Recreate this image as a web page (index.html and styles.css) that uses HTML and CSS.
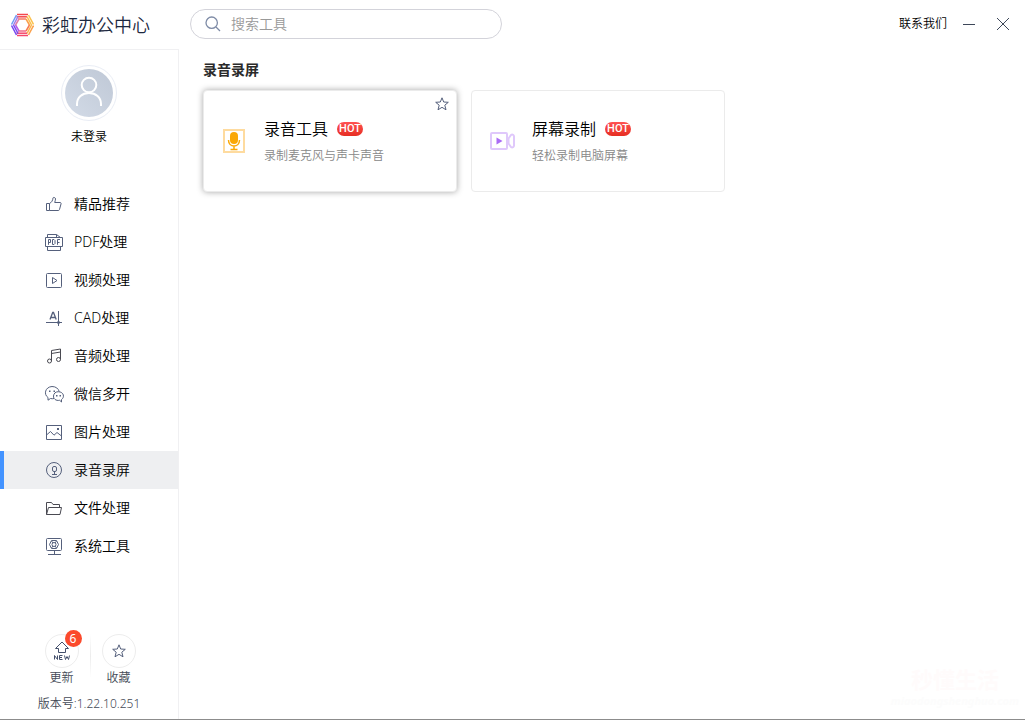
FILE: index.html
```html
<!DOCTYPE html>
<html lang="zh-CN">
<head>
<meta charset="utf-8">
<meta name="viewport" content="width=device-width, initial-scale=1">
<title>彩虹办公中心</title>
<link rel="stylesheet" href="styles.css">
</head>
<body>
<svg class="symbols" aria-hidden="true">
  <symbol id="star" viewBox="0 0 16 16"><path d="M8 1.800l1.700 4.200 4.600.3-3.500 2.900 1.200 4.600L8 11.300l-4 2.500 1.200-4.600L1.700 6.300l4.600-.3z"/></symbol>
</svg>
<div class="app">
  <aside class="sidebar">
    <div class="brand">
      <svg class="brand-logo" viewBox="0 0 24 24" fill="none" stroke-width="1.500">
        <g stroke="#f4474c"><path d="M7 1.500H18"/><path d="M6.500 3.800H17"/><path d="M8 6h8" stroke="#f77a60"/></g>
        <g stroke="#fbc04c"><path d="M18.500 2l5 9.500"/><path d="M17 3.500l4.500 8.500"/><path d="M16 6l3.500 6" stroke="#fba04a"/></g>
        <g stroke="#fba04a"><path d="M23.500 12.500l-5 9.500"/><path d="M21.500 12l-4.500 8.500" stroke="#fbb44c"/><path d="M19.500 12L16 18" stroke="#f77a50"/></g>
        <g stroke="#f4476a"><path d="M18 22.500H7"/><path d="M17 20.200H6.500"/><path d="M16 18H8" stroke="#f06a8a"/></g>
        <g stroke="#7447f0"><path d="M6.500 22L1.500 12.500"/><path d="M8 20.500L3.500 12"/><path d="M9 18l-3.500-6" stroke="#b657e8"/></g>
        <g stroke="#6d9cf7"><path d="M1.500 11.500L6.500 2" /><path d="M3.500 12L8 3.500" stroke="#a07be8"/><path d="M5.500 12L9 6" stroke="#e07fa8"/></g>
      </svg>
      <span class="brand-name">彩虹办公中心</span>
    </div>

    <div class="profile">
      <button class="avatar" type="button" aria-label="登录">
        <svg viewBox="0 0 48 48" fill="none" stroke="#fff" stroke-width="2"><circle cx="24" cy="16" r="7.300"/><path d="M12 37v-2c0-6.500 5.300-11 12-11s12 4.500 12 11v2"/></svg>
      </button>
      <span class="profile-name">未登录</span>
    </div>

    <nav class="menu">
      <a class="menu-item" href="#featured">
        <svg class="menu-icon" viewBox="0 0 20 20"><path d="M2.500 9.500h3v7h-3zM5.500 9.500c2-1 3.300-3 3.500-5.500.2-1 2.500-.8 2.500 1 0 1-.5 2.500-.8 3.500h5.300c1 0 1.300.7 1 1.500l-1.500 5.500c-.2.700-.6 1-1.200 1H5.500"/></svg>
        <span>精品推荐</span>
      </a>
      <a class="menu-item" href="#pdf">
        <svg class="menu-icon" viewBox="0 0 20 20"><path d="M3.500 5.500v-3h9l4 3M12.500 2.500v3h4M3.500 14.500v4h13v-4M1.500 5.500h17v9h-17z"/><path d="M4.500 12.800V7.500h2v3h-2M8.500 7.500h1.500l1 1v3l-1 1H8.500zM13.500 12.800V7.500H16M13.500 10.500h2"/></svg>
        <span>PDF处理</span>
      </a>
      <a class="menu-item" href="#video">
        <svg class="menu-icon" viewBox="0 0 20 20"><rect x="2.500" y="3.500" width="15" height="14" rx="1"/><path d="M8.500 7.500l4.500 3-4.500 3z"/></svg>
        <span>视频处理</span>
      </a>
      <a class="menu-item" href="#cad">
        <svg class="menu-icon" viewBox="0 0 20 20"><path d="M2 14.500h16M14.500 3v15"/><path class="dots" d="M12.500 14.500l2-2 2 2-2 2z"/><path d="M6 11.500L8.700 4.500h.8l2.700 7M7 9.500h4.500" stroke-width="1.300"/></svg>
        <span>CAD处理</span>
      </a>
      <a class="menu-item" href="#audio">
        <svg class="menu-icon menu-icon-dark" viewBox="0 0 20 20"><path d="M7.500 15V4.500L16.500 3v10.500M7.500 7.500l9-1.500"/><circle cx="5.500" cy="15" r="2"/><circle cx="14.500" cy="13.500" r="2"/></svg>
        <span>音频处理</span>
      </a>
      <a class="menu-item" href="#wechat">
        <svg class="menu-icon" viewBox="0 0 20 20"><path d="M10 14.500c-1.200.3-2.200.3-3.500 0L4 16.200v-2.700C-.5 10.500 1 3 8 2.500c4 0 6.500 2.300 7.200 5"/><path d="M14.200 7.700c6 .2 6.500 5.800 3.300 7.800v2.500l-1.800-1.700c-4 .7-6.400-1.600-6.200-4.300.2-2.400 2-4.300 4.700-4.300z"/><path class="dots" d="M5 6.500h1.500V8H5zM9.500 6.500H11V8H9.500zM12 11h1.500v1.500H12zM15.500 11H17v1.500h-1.500z"/></svg>
        <span>微信多开</span>
      </a>
      <a class="menu-item" href="#image">
        <svg class="menu-icon" viewBox="0 0 20 20"><path d="M2.500 3.500h15v14h-15zM2.500 13l4-3.500 3.500 3.700 3-2.700 4.500 3.500"/><path class="dots" d="M13 6h2v2h-2z"/></svg>
        <span>图片处理</span>
      </a>
      <a class="menu-item is-active" href="#record" aria-current="page">
        <svg class="menu-icon" viewBox="0 0 20 20"><circle cx="10" cy="10" r="7.500"/><rect x="8.500" y="6.500" width="4" height="5" rx="1.500"/><path d="M10.500 11.500v3M8 14.500h5"/></svg>
        <span>录音录屏</span>
      </a>
      <a class="menu-item" href="#file">
        <svg class="menu-icon menu-icon-dark" viewBox="0 0 20 20"><path d="M2.500 16.500v-12h5l1.500 2h6.500v3M2.500 16.500l2-7h13l-1.500 7z"/></svg>
        <span>文件处理</span>
      </a>
      <a class="menu-item" href="#system">
        <svg class="menu-icon" viewBox="0 0 20 20"><rect x="2.500" y="2.500" width="15" height="12" rx="1"/><path d="M10.500 14.500v4M4 18.500h13"/><path d="M5.500 8.500l2-4h5l2 4-2 4h-5z"/><circle cx="10" cy="8.500" r="2"/><path d="M7.500 5l1.500 2M12.500 5L11 7M7.500 12L9 10M12.500 12L11 10"/></svg>
        <span>系统工具</span>
      </a>
    </nav>

    <footer class="sidebar-footer">
      <div class="shortcuts">
        <button class="shortcut" type="button">
          <span class="shortcut-circle">
            <svg class="update-icon" viewBox="0 0 18 20"><path d="M5.500 11.500v-4h-3L9 1l6.500 6.500h-3v4z"/><path d="M1.500 18.500v-4l3 4v-4M9.500 14.500h-3v4h3M6.500 16.500H9M11.500 14.500l1 4 1.500-3 1.500 3 1-4"/></svg>
            <span class="count">6</span>
          </span>
          <span>更新</span>
        </button>
        <span class="shortcut-divider"></span>
        <button class="shortcut" type="button">
          <span class="shortcut-circle"><svg class="star-icon"><use href="#star"/></svg></span>
          <span>收藏</span>
        </button>
      </div>
      <p class="version">版本号:1.22.10.251</p>
    </footer>
  </aside>

  <main class="main">
    <header class="topbar">
      <label class="search">
        <svg class="search-icon" viewBox="0 0 16 16"><circle cx="6.700" cy="6.700" r="5.700"/><path d="M11 11l4 4"/></svg>
        <input class="search-input" type="text" placeholder="搜索工具" aria-label="搜索工具">
      </label>
      <div class="window-actions">
        <a class="contact" href="#contact">联系我们</a>
        <button class="window-button" type="button" aria-label="最小化"><svg viewBox="0 0 14 14"><path d="M1 7.500h12"/></svg></button>
        <button class="window-button" type="button" aria-label="关闭"><svg viewBox="0 0 14 14"><path d="M1 1l12 12M13 1L1 13"/></svg></button>
      </div>
    </header>

    <section class="tools">
      <h1 class="tools-title">录音录屏</h1>
      <div class="tool-grid">
        <article class="tool-card is-hovered">
          <a class="tool-link" href="#audio-recorder">
            <svg class="tool-icon" viewBox="0 0 28 28"><rect x="4" y="3" width="20" height="22" fill="none" stroke="#fedb9f" stroke-width="2"/><rect x="10" y="5" width="8" height="12" rx="4" fill="#faa806"/><path d="M8.500 13c0 8 11 8 11 0M14 19v4M10.500 22.500h7" fill="none" stroke="#faa806" stroke-width="1.500"/></svg>
            <span class="tool-text">
              <span class="tool-name">录音工具 <span class="hot">HOT</span></span>
              <span class="tool-desc">录制麦克风与声卡声音</span>
            </span>
          </a>
          <button class="favorite" type="button" aria-label="收藏"><svg class="star-icon"><use href="#star"/></svg></button>
        </article>
        <article class="tool-card">
          <a class="tool-link" href="#screen-recorder">
            <svg class="tool-icon" viewBox="0 0 28 28"><rect x="3" y="6" width="16" height="16" rx="1" fill="none" stroke="#dfc8fb" stroke-width="2"/><path d="M20.500 11.500l2.500-3.500c1.500-1 3 0 3 1.500v9c0 1.500-1.500 2.500-3 1.500l-2.500-3.500z" fill="none" stroke="#dfc8fb" stroke-width="2"/><path d="M8.500 10.500l6 3.500-6 3.500z" fill="#ab6cf5"/></svg>
            <span class="tool-text">
              <span class="tool-name">屏幕录制 <span class="hot">HOT</span></span>
              <span class="tool-desc">轻松录制电脑屏幕</span>
            </span>
          </a>
        </article>
      </div>
    </section>

    <footer class="site-mark">
      <strong class="site-mark-name">秒懂生活</strong>
      <em class="site-mark-url">miaodongshenghuo.com</em>
    </footer>
  </main>
</div>
</body>
</html>
```

FILE: styles.css
```css
* {
  box-sizing: border-box;
}

body {
  margin: 0;
  background: #fff;
  color: #000;
  font-family: "Noto Sans", "Noto Sans CJK SC", sans-serif;
  font-size: 14px;
  font-weight: 350;
  line-height: 20px;
}

a {
  color: inherit;
  text-decoration: none;
}

button {
  padding: 0;
  border: 0;
  background: none;
  color: inherit;
  font: inherit;
  cursor: pointer;
}

svg {
  display: block;
}

.symbols {
  position: absolute;
  width: 0;
  height: 0;
}

.app {
  display: flex;
  min-height: 100vh;
  border-bottom: 1px solid #8c8c8c;
}

/* Sidebar */

.sidebar {
  display: flex;
  flex-direction: column;
  flex: 0 0 179px;
}

.brand {
  display: flex;
  align-items: center;
  gap: 8px;
  height: 50px;
  padding-left: 10px;
  border-bottom: 1px solid #f0f0f2;
}

.brand-logo {
  width: 24px;
  height: 24px;
}

.brand-name {
  color: #1c2840;
  font-size: 18px;
  line-height: 24px;
}

.profile,
.menu,
.sidebar-footer {
  border-right: 1px solid #f0f0f2;
}

.profile {
  display: flex;
  flex-direction: column;
  align-items: center;
  gap: 6px;
  padding: 15px 0 38px;
}

.avatar {
  width: 56px;
  height: 56px;
  padding: 3px;
  border: 1px solid #e9edf5;
  border-radius: 50%;
}

.avatar svg {
  width: 48px;
  height: 48px;
  border-radius: 50%;
  background: linear-gradient(45deg, #d3dbe7, #bfc8d6);
}

.profile-name {
  font-size: 12px;
}

.menu {
  flex: 1;
}

.menu-item {
  display: flex;
  align-items: center;
  gap: 10px;
  height: 38px;
  padding-left: 40px;
  border-left: 4px solid transparent;
}

.menu-item.is-active {
  border-left-color: #4393ff;
  background: #eeeff1;
}

.menu-icon {
  width: 20px;
  height: 20px;
  fill: none;
  stroke: #55607c;
}

.menu-icon-dark {
  stroke: #4a4a52;
}

.menu-icon .dots {
  fill: #55607c;
  stroke: none;
}

.sidebar-footer {
  padding-bottom: 5px;
  color: #444a56;
  font-size: 12px;
}

.shortcuts {
  display: flex;
  justify-content: center;
  gap: 11px;
  padding-left: 2px;
}

.shortcut {
  display: flex;
  flex-direction: column;
  align-items: center;
}

.shortcut-circle {
  position: relative;
  display: flex;
  align-items: center;
  justify-content: center;
  width: 34px;
  height: 34px;
  border: 1px solid #ededed;
  border-radius: 50%;
}

.shortcut-divider {
  width: 1px;
  height: 44px;
  background: linear-gradient(#fff, #ececec, #fff);
}

.update-icon {
  width: 18px;
  height: 20px;
  fill: none;
  stroke: #44506c;
}

.star-icon {
  width: 16px;
  height: 16px;
  fill: none;
  stroke: #55607c;
}

.count {
  position: absolute;
  top: -5px;
  right: -4px;
  width: 17px;
  height: 17px;
  border-radius: 50%;
  background: #fb4a2c;
  color: #fff;
  font-weight: 400;
  line-height: 17px;
  text-align: center;
}

.version {
  margin: 6px 0 0;
  text-align: center;
}

/* Main area */

.main {
  display: flex;
  flex-direction: column;
  flex: 1;
  min-width: 0;
}

.topbar {
  display: flex;
  align-items: center;
  justify-content: space-between;
  height: 48px;
  padding: 0 15px 0 11px;
}

.search {
  display: flex;
  align-items: center;
  gap: 10px;
  width: 312px;
  height: 30px;
  padding: 0 14px;
  border: 1px solid #d3d3da;
  border-radius: 15px;
}

.search-icon {
  width: 16px;
  height: 16px;
  fill: none;
  stroke: #7e8ba6;
  stroke-width: 1.3;
}

.search-input {
  flex: 1;
  min-width: 0;
  padding: 0;
  border: 0;
  outline: 0;
  background: none;
  font: inherit;
}

.search-input::placeholder {
  color: #999;
  opacity: 1;
}

.window-actions {
  display: flex;
  align-items: center;
}

.contact {
  margin-right: 15px;
  font-size: 12px;
}

.window-button {
  width: 14px;
  height: 14px;
}

.window-button + .window-button {
  margin-left: 20px;
}

.window-button svg {
  width: 14px;
  height: 14px;
  stroke: #3d4759;
}

.tools {
  flex: 1;
  padding: 12px 24px 24px;
}

.tools-title {
  margin: 0 0 10px;
  color: #2a2a2a;
  font-size: 14px;
  font-weight: 700;
}

.tool-grid {
  display: grid;
  grid-template-columns: repeat(auto-fill, 254px);
  gap: 14px;
}

.tool-card {
  position: relative;
  border: 1px solid #ebebeb;
  border-radius: 4px;
  background: #fff;
}

.tool-card.is-hovered {
  box-shadow: 0 0 6px rgba(0, 0, 0, 0.35);
}

.tool-link {
  display: flex;
  align-items: center;
  gap: 16px;
  padding: 26px 16px;
}

.tool-icon {
  width: 28px;
  height: 28px;
}

.tool-text {
  display: flex;
  flex-direction: column;
  gap: 6px;
}

.tool-name {
  display: flex;
  align-items: center;
  gap: 9px;
  font-size: 16px;
  line-height: 24px;
}

.hot {
  width: 26px;
  height: 14px;
  border-radius: 7px;
  background: linear-gradient(#ff5252, #e62e22);
  color: #fff;
  font-family: Roboto, sans-serif;
  font-size: 11px;
  font-weight: 500;
  line-height: 14px;
  text-align: center;
}

.tool-desc {
  color: #888;
  font-size: 12px;
  line-height: 18px;
}

.favorite {
  position: absolute;
  top: 5px;
  right: 6px;
}

.site-mark {
  display: flex;
  flex-direction: column;
  align-self: flex-end;
  align-items: center;
  padding: 0 6px 8px;
}

.site-mark-name {
  color: #fffbfb;
  font-size: 22px;
  line-height: 24px;
}

.site-mark-url {
  color: #fcfcfc;
  font-size: 11px;
  font-weight: 700;
}
```
